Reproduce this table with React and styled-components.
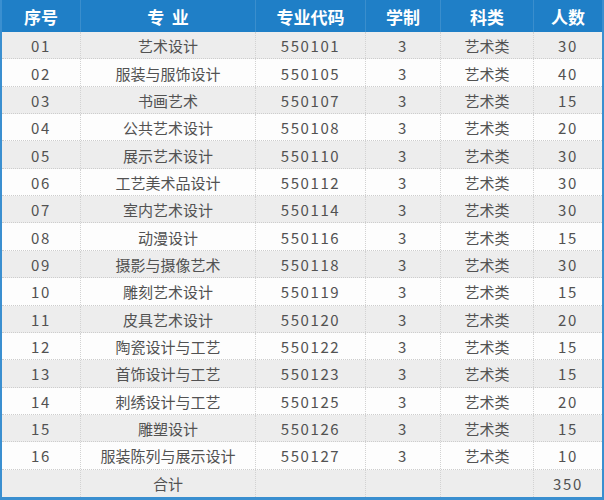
import React from "react";
import styled, { createGlobalStyle } from "styled-components";

const Global = createGlobalStyle`
  html, body { margin: 0; padding: 0; background: #fff; }
  body { font-family: "Noto Sans CJK SC", "Noto Sans", sans-serif; }
`;

const rows = [
  ["01", "艺术设计", "550101", "30"],
  ["02", "服装与服饰设计", "550105", "40"],
  ["03", "书画艺术", "550107", "15"],
  ["04", "公共艺术设计", "550108", "20"],
  ["05", "展示艺术设计", "550110", "30"],
  ["06", "工艺美术品设计", "550112", "30"],
  ["07", "室内艺术设计", "550114", "30"],
  ["08", "动漫设计", "550116", "15"],
  ["09", "摄影与摄像艺术", "550118", "30"],
  ["10", "雕刻艺术设计", "550119", "15"],
  ["11", "皮具艺术设计", "550120", "20"],
  ["12", "陶瓷设计与工艺", "550122", "15"],
  ["13", "首饰设计与工艺", "550123", "15"],
  ["14", "刺绣设计与工艺", "550125", "20"],
  ["15", "雕塑设计", "550126", "15"],
  ["16", "服装陈列与展示设计", "550127", "10"],
];

const Table = styled.div`
  width: 604px;
  height: 500px;
  box-sizing: border-box;
  border-left: 2px solid #3a8fd0;
  border-right: 2px solid #3a8fd0;
  border-bottom: 3px solid #3a8fd0;
  display: grid;
  grid-template-rows: 32px repeat(17, 1fr);
`;

const Row = styled.div`
  display: grid;
  grid-template-columns: 78px 175px 110px 75px 93px 1fr;
  background: ${(p) => (p.$head ? "#1f7fc7" : p.$alt ? "#ededed" : "#fdfdfd")};
  border-bottom: ${(p) => (p.$head || p.$last ? "none" : "1px dotted #cdcdcd")};
`;

const Cell = styled.div`
  display: flex;
  align-items: center;
  justify-content: center;
  padding-top: ${(p) => (p.$head ? "0" : "1px")};
  color: ${(p) => (p.$head ? "#ffffff" : "#525252")};
  font-size: ${(p) => (p.$head ? "17px" : "15px")};
  font-weight: ${(p) => (p.$head ? 700 : 400)};
  letter-spacing: ${(p) => (p.$num ? "1.6px" : "0")};
  border-left: ${(p) =>
    p.$first ? "none" : p.$head ? "1px solid rgba(255,255,255,0.12)" : "1px dotted #d2d2d2"};
  white-space: nowrap;
  line-height: 1;
`;

export default function App() {
  return (
    <>
      <Global />
      <Table>
        <Row $head>
          <Cell $head $first>序号</Cell>
          <Cell $head>专&nbsp;&nbsp;业</Cell>
          <Cell $head>专业代码</Cell>
          <Cell $head>学制</Cell>
          <Cell $head>科类</Cell>
          <Cell $head>人数</Cell>
        </Row>
        {rows.map((r, i) => (
          <Row key={r[0]} $alt={i % 2 === 0}>
            <Cell $first $num>{r[0]}</Cell>
            <Cell>{r[1]}</Cell>
            <Cell $num>{r[2]}</Cell>
            <Cell $num>3</Cell>
            <Cell>艺术类</Cell>
            <Cell $num>{r[3]}</Cell>
          </Row>
        ))}
        <Row $alt $last>
          <Cell $first></Cell>
          <Cell>合计</Cell>
          <Cell></Cell>
          <Cell></Cell>
          <Cell></Cell>
          <Cell $num>350</Cell>
        </Row>
      </Table>
    </>
  );
}
